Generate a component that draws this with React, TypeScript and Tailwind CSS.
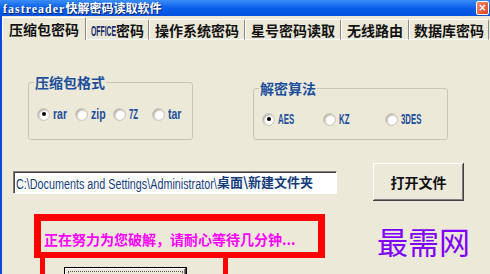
import React from 'react';

type RadioProps = { label: string; checked?: boolean; width: string; narrow?: boolean };

const Radio: React.FC<RadioProps> = ({ label, checked, width, narrow }) => (
  <div className={`flex items-center ${width}`}>
    <span className="flex h-[13px] w-[13px] shrink-0 items-center justify-center rounded-full border border-[#c9c6b8] bg-white shadow-[inset_1px_1px_2px_#9d9b8f]">
      {checked && <span className="h-[4px] w-[4px] rounded-full bg-black" />}
    </span>
    <span
      className={`ml-[3px] inline-block origin-left whitespace-nowrap font-['Liberation_Sans',sans-serif] text-[14px] font-bold leading-[14px] text-[#1c4f9c] ${
        narrow ? 'scale-x-[0.56]' : 'scale-x-[0.75]'
      }`}
    >
      {label}
    </span>
  </div>
);

const tabs = [
  { label: '压缩包密码', w: 'w-[84px]', active: true },
  { label: 'OFFICE', suffix: '密码', w: 'w-[63px]' },
  { label: '操作系统密码', w: 'w-[96px]' },
  { label: '星号密码读取', w: 'w-[96px]' },
  { label: '无线路由', w: 'w-[68px]' },
  { label: '数据库密码', w: 'w-[80px]' },
];

export default function App() {
  return (
    <div className="flex h-[274px] w-[490px] flex-col overflow-hidden bg-[#ECE9D8] font-['Noto_Sans_CJK_SC',sans-serif]">
      {/* title bar */}
      <div className="flex h-[16px] shrink-0 items-center bg-gradient-to-b from-[#3a8cf8] via-[#0a5fea] to-[#0253e0]">
        <span className="ml-[3px] whitespace-nowrap text-[12px] font-bold leading-[12px] text-white [text-shadow:1px_1px_#0a246a]">
          <span className="font-['Liberation_Serif',serif] tracking-[1px]">fastreader</span>
          快解密码读取软件
        </span>
        <span className="ml-auto mr-[1px] flex h-[14px] w-[13px] items-center justify-center rounded-[2px] border border-white bg-gradient-to-br from-[#f08a6a] to-[#d8401c] font-['DejaVu_Sans',sans-serif] text-[10px] font-bold leading-none text-white">
          ×
        </span>
      </div>

      <div className="flex flex-1">
        <div className="w-[2px] shrink-0 bg-[#0a49dc]" />
        <div className="flex flex-1 flex-col">
          {/* tab strip */}
          <div className="flex h-[24px] shrink-0 items-end">
            {tabs.map((t) => (
              <div
                key={t.label}
                className={`flex ${t.w} items-center justify-center whitespace-nowrap rounded-t-[2px] border-l border-t border-r border-l-white border-t-white border-r-[#8a8a80] text-[14px] font-bold leading-[14px] text-[#111] ${
                  t.active ? 'h-[23px] pb-[1px]' : 'h-[21px] border-b border-b-white pt-[1px]'
                }`}
              >
                {t.suffix ? (
                  <>
                    <span className="inline-block w-[25px]">
                      <span className="inline-block origin-left scale-x-[0.49] font-['Liberation_Sans',sans-serif] text-[14px] text-[#1a2a6a]">
                        {t.label}
                      </span>
                    </span>
                    {t.suffix}
                  </>
                ) : (
                  t.label
                )}
              </div>
            ))}
          </div>

          {/* group boxes */}
          <div className="mt-[35px] flex items-end">
            <fieldset className="ml-[26px] h-[65px] w-[165px] rounded-[3px] border border-[#c8c5b6] p-0 pt-[18px]">
              <legend className="ml-[5px] px-[1px] text-[14px] font-bold leading-[14px] text-[#1c4f9c]">压缩包格式</legend>
              <div className="flex pl-[8px]">
                <Radio label="rar" checked width="w-[38px]" />
                <Radio label="zip" width="w-[38px]" />
                <Radio label="7Z" narrow width="w-[39px]" />
                <Radio label="tar" width="w-[38px]" />
              </div>
            </fieldset>
            <fieldset className="ml-[60px] h-[59px] w-[195px] rounded-[3px] border border-[#c8c5b6] p-0 pt-[17px]">
              <legend className="ml-[5px] px-[1px] text-[14px] font-bold leading-[14px] text-[#1c4f9c]">解密算法</legend>
              <div className="flex pl-[8px]">
                <Radio label="AES" narrow checked width="w-[61px]" />
                <Radio label="KZ" narrow width="w-[62px]" />
                <Radio label="3DES" narrow width="w-[60px]" />
              </div>
            </fieldset>
          </div>

          {/* path + open */}
          <div className="mt-[23px] flex items-center">
            <div className="ml-[11px] flex h-[23px] w-[324px] items-center whitespace-nowrap border border-t-[#808080] border-l-[#808080] border-b-white border-r-white bg-white pl-[2px] text-[#163c7c] shadow-[inset_1px_1px_#404040]">
              <span className="inline-block w-[201px] shrink-0">
                <span className="inline-block origin-left scale-x-[0.77] font-['Liberation_Sans',sans-serif] text-[14px] leading-[14px]">
                  C:\Documents and Settings\Administrator\
                </span>
              </span>
              <span className="text-[13px] font-bold leading-[14px]">桌面\新建文件夹</span>
            </div>
            <button className="ml-[36px] flex h-[38px] w-[91px] items-center justify-center bg-[#ECE9D8] text-[14px] font-bold leading-[14px] text-[#111] shadow-[inset_-1px_-1px_#404040,inset_1px_1px_#ffffff,inset_-2px_-2px_#808080]">
              打开文件
            </button>
          </div>

          {/* progress message */}
          <div className="mt-[13px] flex items-start">
            <div className="ml-[32px] flex flex-col">
              <div className="flex h-[44px] w-[291px] items-center whitespace-nowrap border-[7px] border-b-[6px] border-[#ff0000] pl-[3px] pt-[5px] text-[14px] font-bold leading-[14px] text-[#ff00ff]">
                正在努力为您破解，请耐心等待几分钟...
              </div>
              <div className="ml-[6px] h-[30px] w-[188px] border-x-[5px] border-[#ff0000] pl-[20px] pt-[10px]">
                <div className="h-[26px] w-[121px] bg-[#ECE9D8] p-[3px] shadow-[inset_-1px_-1px_#404040,inset_1px_1px_#ffffff,inset_-2px_-2px_#808080,0_0_0_1px_#000]">
                  <div className="h-full w-full border border-dotted border-[#555]" />
                </div>
              </div>
            </div>
            <div className="ml-[52px] mt-[11px] whitespace-nowrap text-[31px] leading-[32px] text-[#8000ff]">最需网</div>
          </div>
        </div>
      </div>
    </div>
  );
}
